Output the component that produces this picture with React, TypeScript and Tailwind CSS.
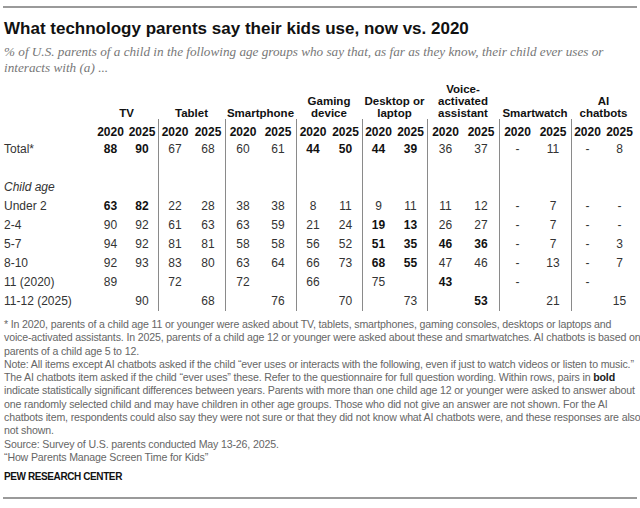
import React from 'react';

type Row = {
  label: string;
  cells: string[][];
  bold: number[];
  italic?: boolean;
};

const groups = [
  ['TV'],
  ['Tablet'],
  ['Smartphone'],
  ['Gaming', 'device'],
  ['Desktop or', 'laptop'],
  ['Voice-', 'activated', 'assistant'],
  ['Smartwatch'],
  ['AI', 'chatbots'],
];

const rows: Row[] = [
  { label: 'Total*', cells: [['88', '90'], ['67', '68'], ['60', '61'], ['44', '50'], ['44', '39'], ['36', '37'], ['-', '11'], ['-', '8']], bold: [0, 3, 4] },
  { label: '', cells: [['', ''], ['', ''], ['', ''], ['', ''], ['', ''], ['', ''], ['', ''], ['', '']], bold: [] },
  { label: 'Child age', italic: true, cells: [['', ''], ['', ''], ['', ''], ['', ''], ['', ''], ['', ''], ['', ''], ['', '']], bold: [] },
  { label: 'Under 2', cells: [['63', '82'], ['22', '28'], ['38', '38'], ['8', '11'], ['9', '11'], ['11', '12'], ['-', '7'], ['-', '-']], bold: [0] },
  { label: '2-4', cells: [['90', '92'], ['61', '63'], ['63', '59'], ['21', '24'], ['19', '13'], ['26', '27'], ['-', '7'], ['-', '-']], bold: [4] },
  { label: '5-7', cells: [['94', '92'], ['81', '81'], ['58', '58'], ['56', '52'], ['51', '35'], ['46', '36'], ['-', '7'], ['-', '3']], bold: [4, 5] },
  { label: '8-10', cells: [['92', '93'], ['83', '80'], ['63', '64'], ['66', '73'], ['68', '55'], ['47', '46'], ['-', '13'], ['-', '7']], bold: [4] },
  { label: '11 (2020)', cells: [['89', ''], ['72', ''], ['72', ''], ['66', ''], ['75', ''], ['43', ''], ['-', ''], ['-', '']], bold: [5] },
  { label: '11-12 (2025)', cells: [['', '90'], ['', '68'], ['', '76'], ['', '70'], ['', '73'], ['', '53'], ['', '21'], ['', '15']], bold: [5] },
];

const gridCols =
  'grid grid-cols-[91px_31px_32px_33px_34px_35px_36px_33px_33px_32px_33px_36px_36px_36px_36px_32px_33px]';

const footLines: React.ReactNode[] = [
  '* In 2020, parents of a child age 11 or younger were asked about TV, tablets, smartphones, gaming consoles, desktops or laptops and',
  'voice-activated assistants. In 2025, parents of a child age 12 or younger were asked about these and smartwatches. AI chatbots is based on',
  'parents of a child age 5 to 12.',
  'Note: All items except AI chatbots asked if the child \u201cever uses or interacts with the following, even if just to watch videos or listen to music.\u201d',
  <>
    The AI chatbots item asked if the child {'\u201cever uses\u201d'} these. Refer to the questionnaire for full question wording. Within rows, pairs in{' '}
    <span className="font-bold text-[#222]">bold</span>
  </>,
  'indicate statistically significant differences between years. Parents with more than one child age 12 or younger were asked to answer about',
  'one randomly selected child and may have children in other age groups. Those who did not give an answer are not shown. For the AI',
  'chatbots item, respondents could also say they were not sure or that they did not know what AI chatbots were, and these responses are also',
  'not shown.',
  'Source: Survey of U.S. parents conducted May 13-26, 2025.',
  '\u201cHow Parents Manage Screen Time for Kids\u201d',
];

export default function App() {
  return (
    <div className="w-[640px] h-[508px] bg-white px-[4px] pt-[6px] overflow-hidden font-['Liberation_Sans',Arial,sans-serif] text-[#222]">
      <div className="h-[2px] bg-[#9a9a9a] -mx-[1px]" />

      <h1 className="mt-[11px] text-[17px] leading-[20px] font-bold text-[#111] whitespace-nowrap">
        What technology parents say their kids use, now vs. 2020
      </h1>
      <p className="mt-[5px] text-[13.2px] leading-[16px] italic text-[#777] font-['Liberation_Serif',Georgia,serif] whitespace-nowrap">
        % of U.S. parents of a child in the following age groups who say that, as far as they know, their child ever uses or
        <br />
        interacts with (a) ...
      </p>

      {/* group headings */}
      <div className={`${gridCols} h-[43px]`}>
        <div />
        {groups.map((g, i) => (
          <div key={i} className="col-span-2 flex flex-col justify-end items-center text-[11.5px] leading-[12px] font-bold text-[#111]">
            {g.map((line) => (
              <span key={line} className="whitespace-nowrap">{line}</span>
            ))}
          </div>
        ))}
      </div>

      {/* years */}
      <div className={`${gridCols} h-[21px]`}>
        <div />
        {groups.map((_, i) => (
          <React.Fragment key={i}>
            <div className={`flex items-end justify-center text-[12px] leading-[15px] font-bold text-[#111] ${i > 0 ? 'border-l border-[#8a8a8a]' : ''}`}>
              2020
            </div>
            <div className="flex items-end justify-center text-[12px] leading-[15px] font-bold text-[#111]">2025</div>
          </React.Fragment>
        ))}
      </div>

      {rows.map((r, ri) => (
        <div key={ri} className={`${gridCols} h-[19px] text-[12px] leading-[19px]`}>
          <div className={`whitespace-nowrap text-[#333] ${r.italic ? 'italic' : ''}`}>{r.label}</div>
          {r.cells.map((pair, gi) => {
            const b = r.bold.includes(gi);
            return (
              <React.Fragment key={gi}>
                <div className={`text-center ${b ? 'font-bold text-[#111]' : 'text-[#333]'} ${gi > 0 ? 'border-l border-[#8a8a8a]' : ''}`}>
                  {pair[0]}
                </div>
                <div className={`text-center ${b ? 'font-bold text-[#111]' : 'text-[#333]'}`}>{pair[1]}</div>
              </React.Fragment>
            );
          })}
        </div>
      ))}

      <div className="mt-[7px] text-[10.6px] leading-[13.3px] tracking-[-0.15px] text-[#666]">
        {footLines.map((l, i) => (
          <div key={i} className="whitespace-nowrap">{l}</div>
        ))}
      </div>

      <div className="mt-[6px] text-[10px] leading-[13px] tracking-[-0.4px] font-bold text-[#111]">
        PEW RESEARCH CENTER
      </div>
      <div className="mt-[14px] h-[2px] bg-[#9a9a9a] -mx-[1px]" />
    </div>
  );
}
